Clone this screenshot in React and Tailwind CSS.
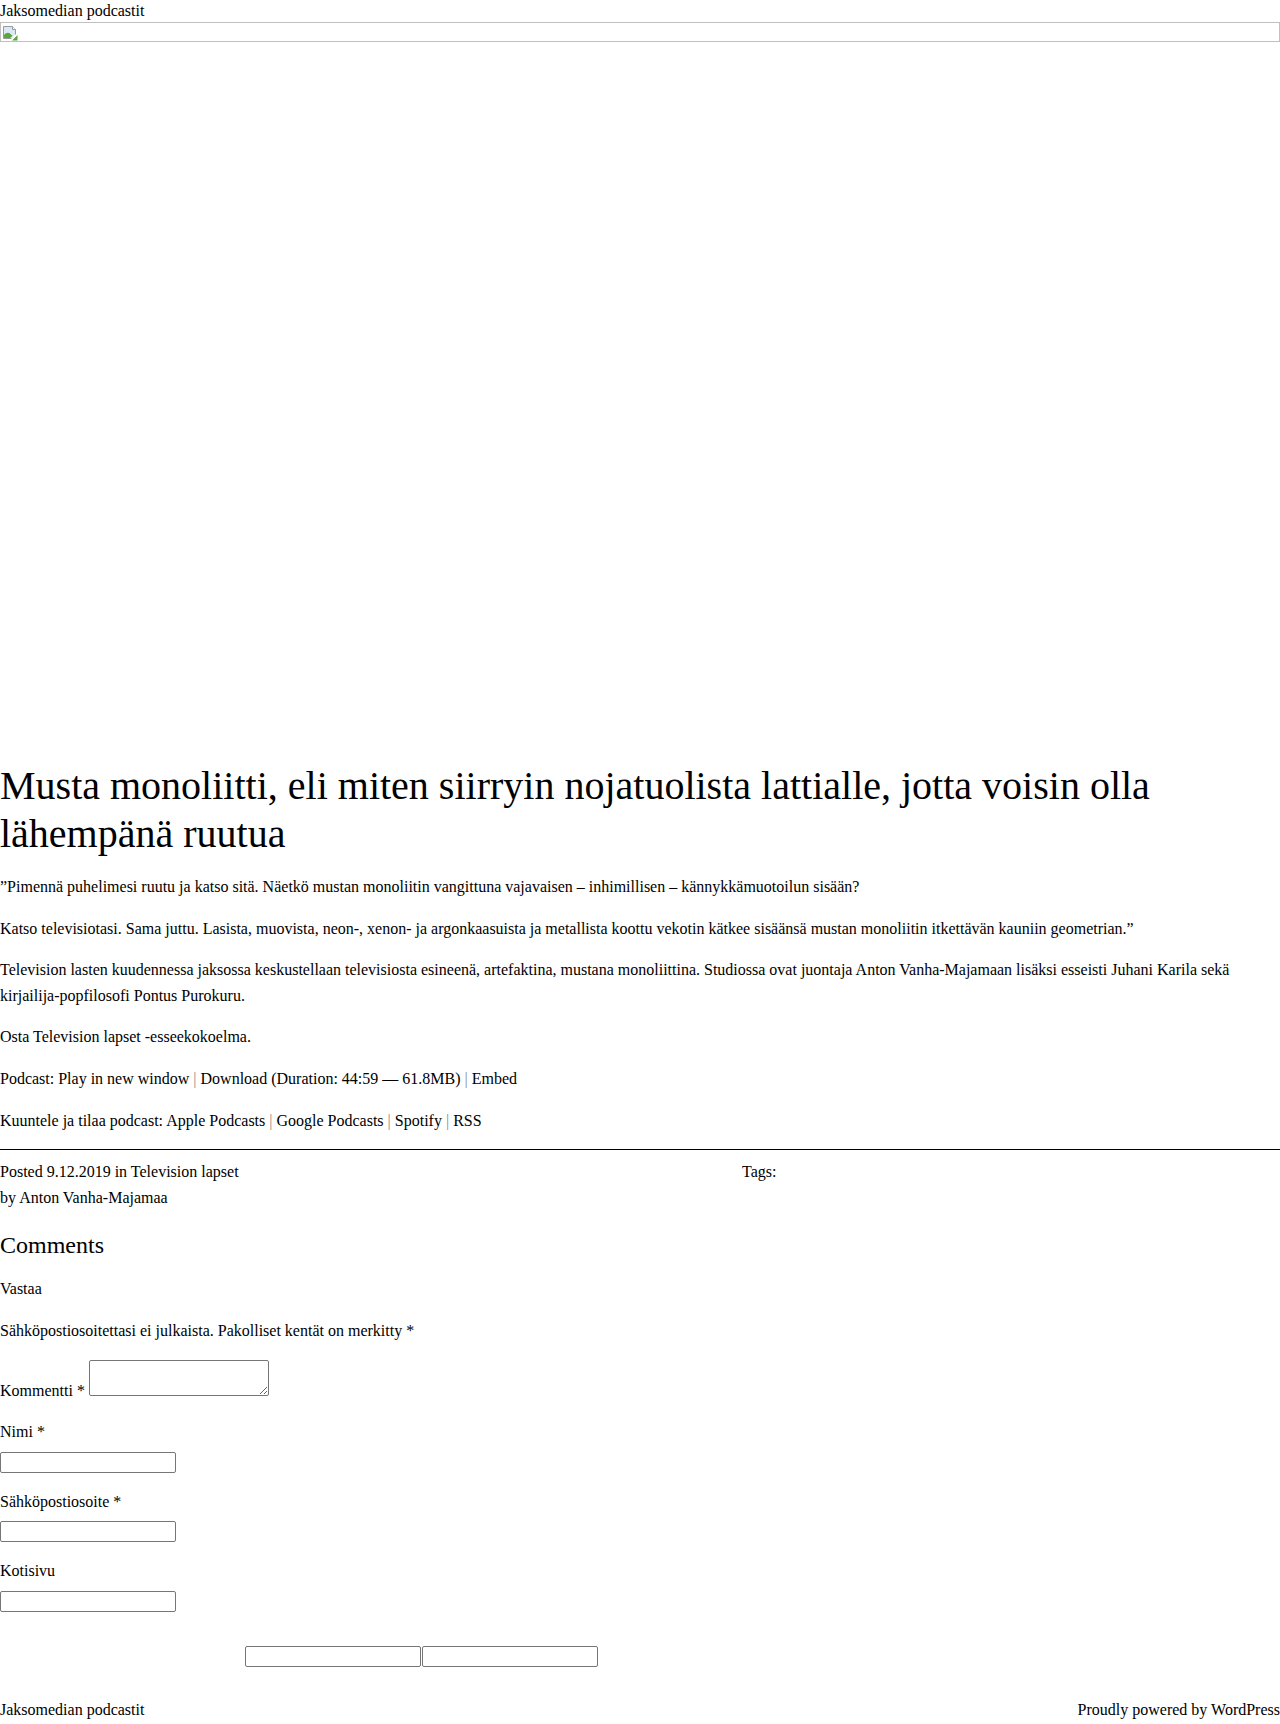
import React from 'react';

const Sep = () => <span className="text-[#8a8a8a]"> | </span>;

const BrokenImageIcon = () => (
  <svg width="16" height="16" viewBox="0 0 16 16" className="block">
    <path d="M1.5 1.5h9l3 3v6l-3 3h-9z" fill="#dbe9f7" stroke="#9a9a9a" />
    <path d="M10.5 1.5v3h3" fill="#ffffff" stroke="#9a9a9a" />
    <path d="M2 13V10c2-2.5 4-3 6-1.5l2.5 2.5L8 13z" fill="#5aa63a" />
    <path d="M10 15.5l5.5-5.5v5.5z" fill="#5aa63a" />
    <path d="M9 15l6-6" stroke="#ffffff" strokeWidth="1.5" />
  </svg>
);

const Field = ({ label, required }) => (
  <p className="mb-4">
    <label className="block">
      {label}
      {required && ' *'}
    </label>
    <input
      type="text"
      className="block mt-[7px] w-[176px] h-[21px] border border-[#767676] rounded-[2px] bg-white"
    />
  </p>
);

export default function App() {
  return (
    <div className="font-['Liberation_Serif','Times_New_Roman',serif] text-[16px] leading-[1.6] text-black bg-white">
      {/* Site header */}
      <div className="leading-[22px]">
        <a href="#">Jaksomedian podcastit</a>
      </div>

      {/* Featured image (broken) */}
      <div className="h-[720px]">
        <div className="h-[20px] border border-[#c0c0c0] pl-[1px] pt-[2px]">
          <BrokenImageIcon />
        </div>
      </div>

      <article>
        <h1 className="mt-[20px] mb-4 text-[40px] leading-[48px] font-normal">
          Musta monoliitti, eli miten siirryin nojatuolista lattialle, jotta voisin olla lähempänä ruutua
        </h1>

        <p className="my-4">
          ”Pimennä puhelimesi ruutu ja katso sitä. Näetkö mustan monoliitin vangittuna vajavaisen – inhimillisen – kännykkämuotoilun sisään?
        </p>
        <p className="my-4">
          Katso televisiotasi. Sama juttu. Lasista, muovista, neon-, xenon- ja argonkaasuista ja metallista koottu vekotin kätkee sisäänsä mustan monoliitin itkettävän kauniin geometrian.”
        </p>
        <p className="my-4">
          Television lasten kuudennessa jaksossa keskustellaan televisiosta esineenä, artefaktina, mustana monoliittina. Studiossa ovat juontaja Anton Vanha-Majamaan lisäksi esseisti Juhani Karila sekä kirjailija-popfilosofi Pontus Purokuru.
        </p>
        <p className="my-4">
          <a href="#">Osta Television lapset -esseekokoelma.</a>
        </p>
        <p className="my-4">
          Podcast: <a href="#">Play in new window</a>
          <Sep />
          <a href="#">Download</a> (Duration: 44:59 — 61.8MB)
          <Sep />
          <a href="#">Embed</a>
        </p>
        <p className="mt-4">
          Kuuntele ja tilaa podcast: <a href="#">Apple Podcasts</a>
          <Sep />
          <a href="#">Google Podcasts</a>
          <Sep />
          <a href="#">Spotify</a>
          <Sep />
          <a href="#">RSS</a>
        </p>

        <hr className="mt-4 border-t border-black" />

        <div className="mt-[9px] grid grid-cols-[742px_1fr]">
          <div>
            <div>
              Posted <a href="#">9.12.2019</a> in <a href="#">Television lapset</a>
            </div>
            <div>
              by <a href="#">Anton Vanha-Majamaa</a>
            </div>
          </div>
          <div>Tags:</div>
        </div>
      </article>

      {/* Comments */}
      <section>
        <h2 className="mt-4 mb-[12px] text-[24px] leading-[38px] font-normal">Comments</h2>
        <p className="my-3">Vastaa</p>
        <p className="my-4">Sähköpostiosoitettasi ei julkaista. Pakolliset kentät on merkitty *</p>
        <p className="my-4">
          <label>Kommentti *</label>{' '}
          <textarea className="w-[180px] h-[36px] border border-[#767676] rounded-[2px] bg-white resize align-baseline" />
        </p>
        <Field label="Nimi" required />
        <Field label="Sähköpostiosoite" required />
        <Field label="Kotisivu" />
        <div className="mt-[34px] flex gap-px pl-[245px]">
          <input type="submit" value="" className="w-[176px] h-[21px] border border-[#767676] rounded-[2px] bg-white" />
          <input type="submit" value="" className="w-[176px] h-[21px] border border-[#767676] rounded-[2px] bg-white" />
        </div>
      </section>

      <footer className="mt-[30px] flex justify-between">
        <a href="#">Jaksomedian podcastit</a>
        <a href="#">Proudly powered by WordPress</a>
      </footer>
    </div>
  );
}
